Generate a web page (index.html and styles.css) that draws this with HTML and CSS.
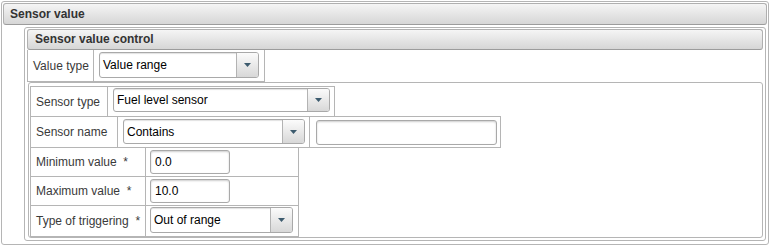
FILE: index.html
```html
<!DOCTYPE html>
<html>
<head>
<meta charset="utf-8">
<link rel="stylesheet" href="styles.css">
</head>
<body>
<div class="panel">
  <div class="panel-hdr">Sensor value</div>
  <div class="sub">
    <div class="sub-hdr">Sensor value control</div>
    <div class="tbl vt">
      <div class="lbl vt-lbl">Value type</div>
      <div class="val vt-val">
        <div class="sel vt-sel"><span class="sel-text">Value range</span><span class="sel-btn"><svg width="7" height="4" viewBox="0 0 7 4"><path d="M0 0H7L3.5 4Z" fill="#3d5b6e"/></svg></span></div>
      </div>
    </div>
    <div class="box">
      <div class="tbl st">
        <div class="lbl st-lbl">Sensor type</div>
        <div class="val st-val">
          <div class="sel st-sel"><span class="sel-text">Fuel level sensor</span><span class="sel-btn"><svg width="7" height="4" viewBox="0 0 7 4"><path d="M0 0H7L3.5 4Z" fill="#3d5b6e"/></svg></span></div>
        </div>
      </div>
      <div class="tbl sn">
        <div class="lbl sn-lbl">Sensor name</div>
        <div class="val sn-val">
          <div class="sel sn-sel"><span class="sel-text">Contains</span><span class="sel-btn"><svg width="7" height="4" viewBox="0 0 7 4"><path d="M0 0H7L3.5 4Z" fill="#3d5b6e"/></svg></span></div>
        </div>
        <div class="val sn-inp-cell">
          <div class="inp sn-inp"></div>
        </div>
      </div>
      <div class="tbl mm">
        <div class="mm-row">
          <div class="lbl mm-lbl">Minimum value &nbsp;*</div>
          <div class="val mm-val"><div class="inp num-inp">0.0</div></div>
        </div>
        <div class="mm-row">
          <div class="lbl mm-lbl">Maximum value &nbsp;*</div>
          <div class="val mm-val"><div class="inp num-inp">10.0</div></div>
        </div>
        <div class="mm-row last">
          <div class="lbl mm-lbl">Type of triggering &nbsp;*</div>
          <div class="val mm-val mm-val-sel"><div class="sel tt-sel"><span class="sel-text">Out of range</span><span class="sel-btn"><svg width="7" height="4" viewBox="0 0 7 4"><path d="M0 0H7L3.5 4Z" fill="#3d5b6e"/></svg></span></div></div>
        </div>
      </div>
    </div>
  </div>
</div>
</body>
</html>
```

FILE: styles.css
```css
html, body {
  margin: 0;
  padding: 0;
  background: #ffffff;
}

body {
  font-family: "Liberation Sans", Arial, sans-serif;
  font-size: 12px;
  color: #333333;
}

* {
  box-sizing: border-box;
}

.panel {
  margin: 1px 0 0 1px;
  width: 768px;
  height: 244px;
  border: 1px solid #b5b5b5;
  border-radius: 3px;
  padding: 1px;
}

.panel-hdr {
  height: 22px;
  border: 1px solid #b0b0b0;
  border-bottom-color: #9c9c9c;
  border-radius: 3px;
  background: linear-gradient(#f5f5f5, #d6d6d6);
  font-weight: bold;
  line-height: 20px;
  padding-left: 6px;
  color: #333333;
}

.sub {
  margin: 2px 1px 0 21px;
  height: 214px;
  border: 1px solid #b5b5b5;
  border-radius: 3px;
  padding: 1px 2px;
}

.sub-hdr {
  height: 21px;
  border: 1px solid #b0b0b0;
  border-bottom-color: #9c9c9c;
  border-radius: 3px;
  background: linear-gradient(#f5f5f5, #d6d6d6);
  font-weight: bold;
  line-height: 19px;
  padding-left: 7px;
  color: #333333;
}

.tbl {
  display: flex;
  border: 1px solid #b5b5b5;
  background: #ffffff;
}

.lbl {
  display: flex;
  align-items: center;
  padding-left: 5px;
  white-space: nowrap;
  color: #3a3a3a;
}

.val {
  border-left: 1px solid #b5b5b5;
}

/* Value type */
.vt {
  width: 238px;
  height: 32px;
  border-top: none;
}
.vt-lbl { width: 65px; }
.vt-val { width: 171px; padding: 2px 5px 0 5px; }
.vt-sel { width: 160px; height: 26px; }

/* container box */
.box {
  margin-left: 1px;
  height: 156px;
  border: 1px solid #b5b5b5;
  border-radius: 3px;
  padding: 3px 0 0 1px;
}

/* Sensor type */
.st {
  width: 305px;
  height: 31px;
}
.st-lbl { width: 76px; }
.st-val { width: 227px; padding: 1px 4px 0 5px; }
.st-sel { width: 217px; height: 24px; }

/* Sensor name */
.sn {
  width: 471px;
  height: 32px;
  margin-top: -1px;
}
.sn-lbl { width: 86px; }
.sn-val { width: 192px; padding: 2px 4px 0 5px; }
.sn-sel { width: 182px; height: 25px; }
.sn-inp-cell { width: 191px; padding: 3px 3px 0 6px; }
.sn-inp { width: 181px; height: 25px; }

/* Min / max table */
.mm {
  display: block;
  width: 269px;
  margin-top: -1px;
}
.mm-row {
  display: flex;
  height: 29px;
  border-bottom: 1px solid #b5b5b5;
}
.mm-row.last {
  height: 30px;
  border-bottom: none;
}
.mm-lbl { width: 114px; }
.mm-val { width: 153px; padding: 2px 0 0 4px; }
.mm-val-sel { padding-top: 1px; }
.num-inp { width: 80px; height: 24px; }
.tt-sel { width: 143px; height: 26px; }

/* controls */
.sel {
  display: flex;
  border: 1px solid #a9a9a9;
  border-radius: 3px;
  background: #ffffff;
  box-shadow: inset 0 1px 1px rgba(0, 0, 0, 0.12);
  overflow: hidden;
}
.sel-text {
  flex: 1;
  display: flex;
  align-items: center;
  padding-left: 3px;
  color: #000000;
  white-space: nowrap;
}
.sel-btn {
  width: 22px;
  display: flex;
  align-items: center;
  justify-content: center;
  border-left: 1px solid #b3b3b3;
  background: linear-gradient(#fbfbfb, #d8d8d8);
}

.inp {
  display: flex;
  align-items: center;
  border: 1px solid #a9a9a9;
  border-radius: 3px;
  background: #ffffff;
  box-shadow: inset 0 1px 2px rgba(0, 0, 0, 0.2);
  padding-left: 4px;
  color: #000000;
}
```
